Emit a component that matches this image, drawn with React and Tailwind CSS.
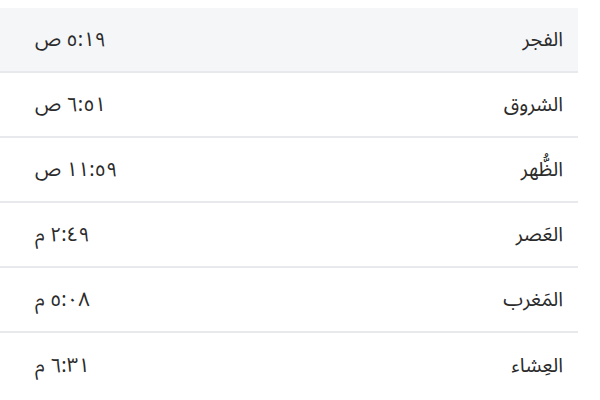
const prayers = [
  { name: 'الفجر', time: '٥:١٩ ص' },
  { name: 'الشروق', time: '٦:٥١ ص' },
  { name: 'الظُّهر', time: '١١:٥٩ ص' },
  { name: 'العَصر', time: '٢:٤٩ م' },
  { name: 'المَغرب', time: '٥:٠٨ م' },
  { name: 'العِشاء', time: '٦:٣١ م' },
]

export default function App() {
  return (
    <div className="w-[600px] h-[400px] bg-white overflow-hidden pt-2">
      <div
        dir="rtl"
        className="w-[578px] text-[20px] text-[#2b2b2b]"
        style={{ fontFamily: '"Noto Sans Arabic", "DejaVu Sans", sans-serif' }}
      >
        {prayers.map((p, i) => (
          <div
            key={p.name}
            className={`h-[65px] flex items-center justify-between pr-[15px] pl-[35px] ${
              i === 0 ? 'bg-[#f5f6f8]' : ''
            } ${i < prayers.length - 1 ? 'border-b-2 border-[#e8e9ec]' : ''}`}
          >
            <span className="tracking-[0.5px]">{p.name}</span>
            <span className="tracking-[1px]">{p.time}</span>
          </div>
        ))}
      </div>
    </div>
  )
}
